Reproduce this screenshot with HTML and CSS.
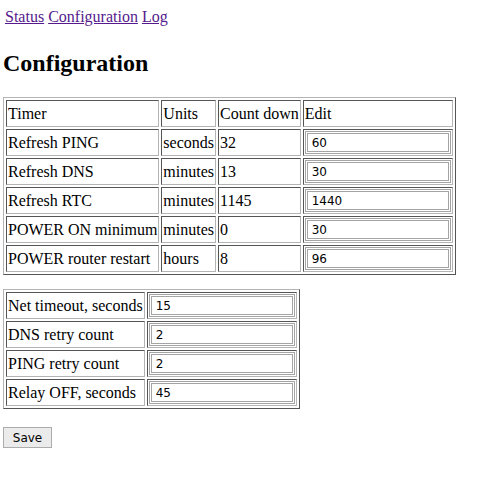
FILE: index.html
```html
<!DOCTYPE html>
<html lang="en">
<head>
    <meta charset="UTF-8">
    <title>Configuration</title>
    <link rel="stylesheet" href="styles.css">
</head>
<body>
    <nav class="top-links">
        <a href="status.html">Status</a> <a href="config.html">Configuration</a> <a href="log.html">Log</a>
    </nav>

    <h2>Configuration</h2>

    <form id="configForm">
        <table class="cfg-table timers">
            <tr>
                <td>Timer</td>
                <td>Units</td>
                <td>Count down</td>
                <td>Edit</td>
            </tr>
            <tr>
                <td>Refresh PING</td>
                <td>seconds</td>
                <td>32</td>
                <td><input type="text" name="ping" value="60"></td>
            </tr>
            <tr>
                <td>Refresh DNS</td>
                <td>minutes</td>
                <td>13</td>
                <td><input type="text" name="dns" value="30"></td>
            </tr>
            <tr>
                <td>Refresh RTC</td>
                <td>minutes</td>
                <td>1145</td>
                <td><input type="text" name="rtc" value="1440"></td>
            </tr>
            <tr>
                <td>POWER ON minimum</td>
                <td>minutes</td>
                <td>0</td>
                <td><input type="text" name="pwron" value="30"></td>
            </tr>
            <tr>
                <td>POWER router restart</td>
                <td>hours</td>
                <td>8</td>
                <td><input type="text" name="restart" value="96"></td>
            </tr>
        </table>

        <table class="cfg-table settings">
            <tr>
                <td>Net timeout, seconds</td>
                <td><input type="text" name="nettimeout" value="15"></td>
            </tr>
            <tr>
                <td>DNS retry count</td>
                <td><input type="text" name="dnsretry" value="2"></td>
            </tr>
            <tr>
                <td>PING retry count</td>
                <td><input type="text" name="pingretry" value="2"></td>
            </tr>
            <tr>
                <td>Relay OFF, seconds</td>
                <td><input type="text" name="relayoff" value="45"></td>
            </tr>
        </table>

        <button class="save-button" type="submit">Save</button>
    </form>
</body>
</html>
```

FILE: styles.css
```css
body {
    margin: 8px 3px;
    font-family: 'Liberation Serif', 'Times New Roman', serif;
    font-size: 16px;
    color: #000;
    background-color: #fff;
}

.top-links {
    padding-left: 2px;
    line-height: 18px;
}

.top-links a {
    color: #551a8b;
}

h2 {
    font-size: 24px;
    margin: 24px 0 20px;
    line-height: 27px;
}

.cfg-table {
    border-collapse: separate;
    border-spacing: 2px;
    border: 1px solid;
    border-color: #b4b4b4 #555 #555 #b4b4b4;
}

.cfg-table td {
    border: 1px solid;
    border-color: #555 #b4b4b4 #b4b4b4 #555;
    padding: 1px;
    height: 23px;
    vertical-align: middle;
    white-space: nowrap;
}

.timers {
    margin-bottom: 14px;
}

.settings {
    margin-bottom: 18px;
}

.cfg-table input {
    box-sizing: border-box;
    width: 146px;
    height: 23px;
    margin: 0;
    padding: 1px 4px 0;
    border: 3px double #a4a4a4;
    font-family: 'DejaVu Sans', Tahoma, sans-serif;
    font-size: 12px;
}

.save-button {
    font-family: 'DejaVu Sans', Tahoma, sans-serif;
    font-size: 12px;
    width: 49px;
    height: 21px;
    padding: 0;
    background-color: #ebebeb;
    border: 1px solid #acacac;
    border-radius: 0;
    color: #000;
}
```
